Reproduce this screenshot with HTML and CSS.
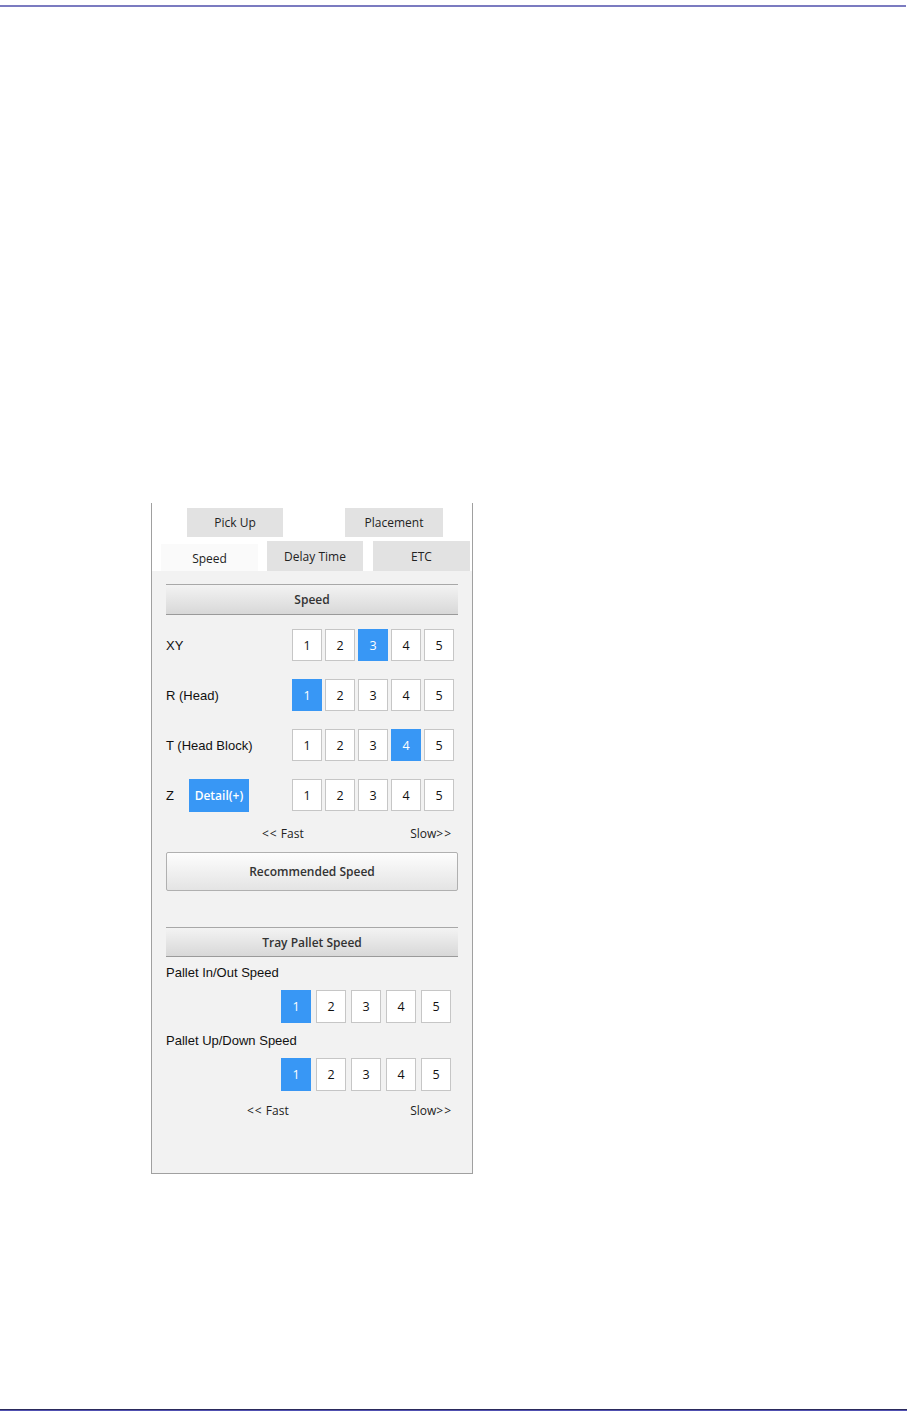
FILE: index.html
```html
<!DOCTYPE html>
<html lang="en">
  <head>
    <meta charset="UTF-8" />
    <meta name="viewport" content="width=device-width, initial-scale=1.0" />
    <title>Speed Settings</title>
    <link rel="stylesheet" href="styles.css">
  </head>
  <body>
    <div class="page">
      <div class="rule-top"></div>

      <div class="panel">
        <div class="tabs tabs-upper">
          <div class="tab tab-pick">Pick Up</div>
          <div class="tab tab-place">Placement</div>
        </div>
        <div class="tabs tabs-lower">
          <div class="tab active">Speed</div>
          <div class="tab">Delay Time</div>
          <div class="tab">ETC</div>
        </div>

        <div class="pane">
          <div class="section-head">Speed</div>

          <div class="speed-row first">
            <span class="label">XY</span>
            <div class="steps">
              <span class="step">1</span>
              <span class="step">2</span>
              <span class="step on">3</span>
              <span class="step">4</span>
              <span class="step">5</span>
            </div>
          </div>
          <div class="speed-row">
            <span class="label">R (Head)</span>
            <div class="steps">
              <span class="step on">1</span>
              <span class="step">2</span>
              <span class="step">3</span>
              <span class="step">4</span>
              <span class="step">5</span>
            </div>
          </div>
          <div class="speed-row">
            <span class="label">T (Head Block)</span>
            <div class="steps">
              <span class="step">1</span>
              <span class="step">2</span>
              <span class="step">3</span>
              <span class="step on">4</span>
              <span class="step">5</span>
            </div>
          </div>
          <div class="speed-row">
            <span class="label">Z</span>
            <span class="detail-btn">Detail(+)</span>
            <div class="steps">
              <span class="step">1</span>
              <span class="step">2</span>
              <span class="step">3</span>
              <span class="step">4</span>
              <span class="step">5</span>
            </div>
          </div>

          <div class="scale scale-speed">
            <span><span class="arrows">&lt;&lt;</span> Fast</span>
            <span>Slow<span class="arrows">&gt;&gt;</span></span>
          </div>

          <div class="wide-btn">Recommended Speed</div>

          <div class="section-head tray-head">Tray Pallet Speed</div>

          <div class="tray-label first">Pallet In/Out Speed</div>
          <div class="tray-steps">
            <span class="step on">1</span>
            <span class="step">2</span>
            <span class="step">3</span>
            <span class="step">4</span>
            <span class="step">5</span>
          </div>

          <div class="tray-label">Pallet Up/Down Speed</div>
          <div class="tray-steps">
            <span class="step on">1</span>
            <span class="step">2</span>
            <span class="step">3</span>
            <span class="step">4</span>
            <span class="step">5</span>
          </div>

          <div class="scale scale-tray">
            <span><span class="arrows">&lt;&lt;</span> Fast</span>
            <span>Slow<span class="arrows">&gt;&gt;</span></span>
          </div>
        </div>
      </div>

      <div class="rule-bottom"></div>
    </div>
  </body>
</html>
```

FILE: styles.css
```css
body {
  margin: 0;
  background: #fff;
  font-family: "Open Sans", "Noto Sans", sans-serif;
  color: #222;
}
.page {
  display: flex;
  flex-direction: column;
  height: 1421px;
}
.rule-top {
  width: 906px;
  height: 2px;
  margin-top: 5px;
  background-color: #7b7bc0;
}
.rule-bottom {
  width: 907px;
  height: 1px;
  margin-top: auto;
  margin-bottom: 10px;
  background-color: #5050b0;
  border-top: 1px solid #2a2a5c;
}

/* panel */
.panel {
  width: 320px;
  margin: 496px 0 0 151px;
  border: 1px solid #a0a0a0;
  border-top: none;
  background: #fff;
}
.tabs {
  display: flex;
  font-size: 12px;
}
.tab {
  width: 96px;
  height: 30px;
  display: flex;
  align-items: center;
  justify-content: center;
  background-color: #e2e2e2;
}
.tabs-upper {
  margin-top: 5px;
  padding-left: 35px;
  gap: 62px;
}
.tabs-upper .tab {
  height: 29px;
}
.tab-place {
  width: 98px;
}
.tabs-lower {
  margin-top: 4px;
  padding-left: 9px;
  gap: 9px;
  align-items: flex-end;
}
.tabs-lower .tab:last-child {
  margin-left: 1px;
  width: 97px;
}
.tab.active {
  width: 97px;
  height: 27px;
  padding-top: 2px;
  box-sizing: border-box;
  background-color: #fafafa;
}

.pane {
  background-color: #f2f2f2;
  padding: 13px 14px 54px;
}
.section-head {
  height: 29px;
  display: flex;
  align-items: center;
  justify-content: center;
  font-size: 12px;
  font-weight: 600;
  color: #333;
  border-top: 1px solid #a8a8a8;
  border-bottom: 1px solid #9a9a9a;
  background: linear-gradient(#f3f3f3, #d8d8d8);
}

.speed-row {
  display: flex;
  align-items: center;
  height: 32px;
  margin-top: 18px;
  padding-right: 4px;
}
.speed-row.first {
  margin-top: 14px;
}
.label,
.tray-label {
  font-family: "Liberation Sans", Arial, sans-serif;
  font-size: 13px;
  color: #111;
}
.steps {
  display: flex;
  gap: 3px;
  margin-left: auto;
}
.step {
  width: 28px;
  height: 30px;
  display: flex;
  align-items: center;
  justify-content: center;
  font-size: 12.5px;
  color: #111;
  background-color: #fff;
  border: 1px solid #c6c6c6;
}
.step.on {
  background-color: #3897f5;
  border-color: #3897f5;
  color: #fff;
}
.detail-btn {
  margin-left: 15px;
  width: 60px;
  height: 33px;
  display: flex;
  align-items: center;
  justify-content: center;
  font-size: 12px;
  font-weight: 600;
  color: #fff;
  background-color: #3897f5;
}

.scale {
  display: flex;
  justify-content: space-between;
  font-size: 12px;
  line-height: 16px;
  color: #222;
}
.arrows {
  letter-spacing: 1px;
}
.scale-speed {
  margin-top: 15px;
  padding: 0 6px 0 96px;
}
.scale-tray {
  margin-top: 12px;
  padding: 0 6px 0 81px;
}

.wide-btn {
  margin-top: 10px;
  height: 37px;
  display: flex;
  align-items: center;
  justify-content: center;
  font-size: 12px;
  font-weight: 600;
  color: #333;
  border: 1px solid #b0b0b0;
  border-radius: 2px;
  background: linear-gradient(#fdfdfd, #e4e4e4);
}
.tray-head {
  margin-top: 36px;
  height: 28px;
}

.tray-label {
  line-height: 16px;
  margin-top: 10px;
}
.tray-label.first {
  margin-top: 8px;
}
.tray-steps {
  display: flex;
  justify-content: flex-end;
  gap: 5px;
  padding-right: 7px;
  margin-top: 9px;
}
.tray-steps .step {
  height: 31px;
}
```
